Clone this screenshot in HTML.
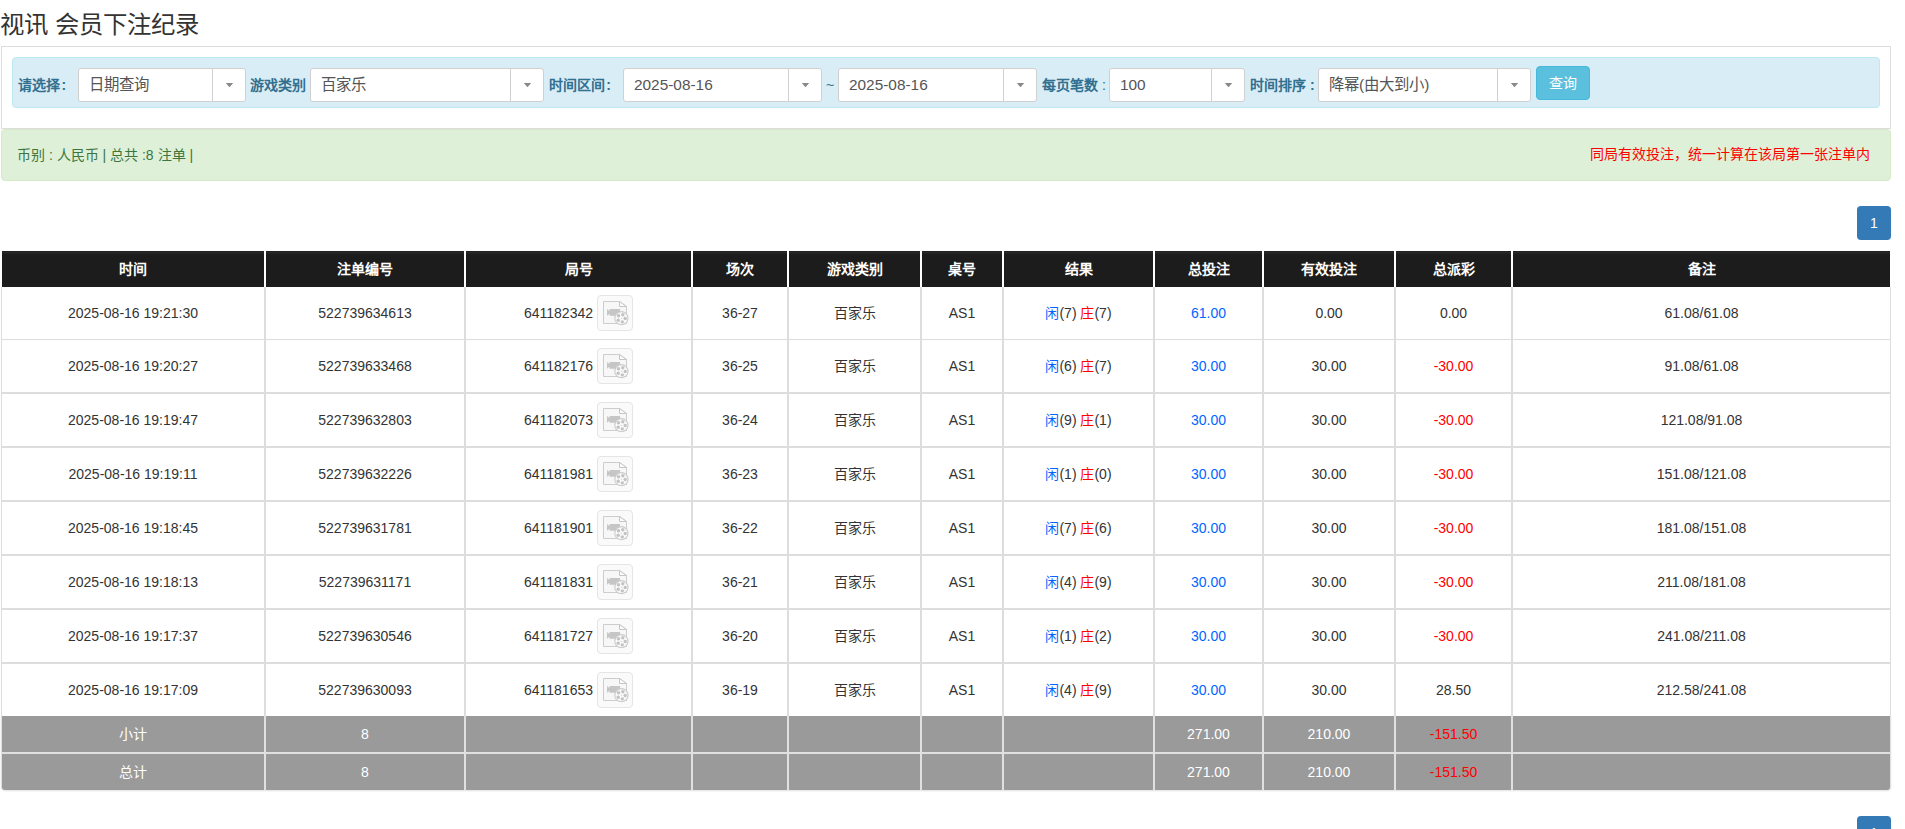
<!DOCTYPE html>
<html lang="zh-CN"><head><meta charset="utf-8"><title>视讯 会员下注纪录</title>
<style>
*{box-sizing:border-box;margin:0;padding:0}
html,body{width:1905px;height:829px;overflow:hidden;background:#fff}
body{font-family:"Liberation Sans",sans-serif;font-size:14px;color:#333;position:relative}
.a{position:absolute}
.title{left:0;top:12px;font-size:24.4px;line-height:26px;color:#333;white-space:nowrap}
.panel{left:1px;top:46px;width:1890px;height:83px;border:1px solid #ddd;background:#fff}
.info{left:12px;top:57px;width:1868px;height:51px;border:1px solid #bce8f1;background:#d9edf7;border-radius:4px}
.lbl{color:#31708f;font-weight:bold;font-size:14px;line-height:16px;top:77px;white-space:nowrap}
.sel{top:68px;height:34px;border:1px solid #d0d0d0;border-radius:3px;background:#fff}
.sel .t{position:absolute;left:10px;top:7px;font-size:15.4px;line-height:17px;color:#555;white-space:nowrap}
.sel .d{position:absolute;top:0;bottom:0;width:1px;background:#d0d0d0}
.sel .ar{position:absolute;top:13.9px;width:7.4px;height:4.3px;background:#888;clip-path:polygon(0 0,100% 0,50% 100%)}
.btn{left:1536px;top:66px;width:54px;height:34px;background:#5bc0de;border:1px solid #46b8da;border-radius:4px;color:#fff;font-size:14px;line-height:32px;text-align:center}
.ok{left:1px;top:129px;width:1890px;height:52px;border:1px solid #d6e9c6;background:#dff0d8;border-radius:4px}
.okt{top:147px;left:17px;color:#3c763d;font-size:14px;line-height:16px;white-space:nowrap}
.red{color:#f00}
.redt{top:146px;right:35px;font-size:14px;line-height:16px;white-space:nowrap}
.pg{left:1857px;width:34px;height:34px;background:#337ab7;border-radius:4px;color:#fff;text-align:center;font-size:14px;line-height:34px}
.cell{position:absolute;text-align:center;white-space:nowrap;overflow:hidden}
.th{top:251px;height:36px;background:linear-gradient(#202020 0,#202020 1px,#292929 1px,#262626 2px,#1e1e1e 3px,#1c1c1c 4px);color:#fff;font-weight:bold;line-height:36px;font-size:14px}
.td{height:52px;line-height:52px;background:#fff}
.tf{height:36px;line-height:36px;background:#9a9a9a;color:#fff}
.blue{color:#0066ff}
.ico{display:inline-block;vertical-align:middle;width:36px;height:36px;border:1px solid #e5e5e5;border-radius:4px;background:#fafafa;margin-left:4px;position:relative;top:-1px}
.ico svg{position:absolute;left:-1px;top:-1px}
</style></head><body>

<div class="a title">视讯 会员下注纪录</div>
<div class="a panel"></div>
<div class="a info"></div>
<div class="a lbl" style="left:18px">请选择<span style="margin-left:1.5px">:</span></div>
<div class="a lbl" style="left:250px">游戏类别</div>
<div class="a lbl" style="left:549px">时间区间<span style="margin-left:1.3px">:</span></div>
<div class="a lbl" style="left:826px;font-weight:normal">~</div>
<div class="a lbl" style="left:1042px">每页笔数<span style="font-weight:normal"> : </span></div>
<div class="a lbl" style="left:1250px">时间排序 :</div>
<div class="a sel" style="left:78px;width:168px"><span class="t">日期查询</span><span class="d" style="left:133px"></span><span class="ar" style="left:146.8px"></span></div>
<div class="a sel" style="left:310px;width:234px"><span class="t">百家乐</span><span class="d" style="left:199px"></span><span class="ar" style="left:212.79999999999995px"></span></div>
<div class="a sel" style="left:623px;width:199px"><span class="t">2025-08-16</span><span class="d" style="left:164px"></span><span class="ar" style="left:177.79999999999995px"></span></div>
<div class="a sel" style="left:838px;width:199px"><span class="t">2025-08-16</span><span class="d" style="left:164px"></span><span class="ar" style="left:177.79999999999995px"></span></div>
<div class="a sel" style="left:1109px;width:136px"><span class="t">100</span><span class="d" style="left:101px"></span><span class="ar" style="left:114.79999999999995px"></span></div>
<div class="a sel" style="left:1318px;width:213px"><span class="t">降幂(由大到小)</span><span class="d" style="left:178px"></span><span class="ar" style="left:191.79999999999995px"></span></div>
<div class="a btn">查询</div>
<div class="a ok"></div>
<div class="a okt">币别 : 人民币 | 总共 :8 注单 |</div>
<div class="a redt red">同局有效投注，统一计算在该局第一张注单内</div>
<div class="a pg" style="top:206px">1</div>
<div class="a pg" style="top:816px">1</div>
<div class="a" style="left:1px;top:287px;width:1890px;height:429px;background:#ddd"></div>
<div class="cell th" style="left:2px;width:262px">时间</div>
<div class="cell th" style="left:266px;width:198px">注单编号</div>
<div class="cell th" style="left:466px;width:225px">局号</div>
<div class="cell th" style="left:693px;width:94px">场次</div>
<div class="cell th" style="left:789px;width:131px">游戏类别</div>
<div class="cell th" style="left:922px;width:80px">桌号</div>
<div class="cell th" style="left:1004px;width:149px">结果</div>
<div class="cell th" style="left:1155px;width:107px">总投注</div>
<div class="cell th" style="left:1264px;width:130px">有效投注</div>
<div class="cell th" style="left:1396px;width:115px">总派彩</div>
<div class="cell th" style="left:1513px;width:377px">备注</div>
<div class="cell td" style="left:2px;top:287px;width:262px">2025-08-16 19:21:30</div>
<div class="cell td" style="left:266px;top:287px;width:198px">522739634613</div>
<div class="cell td" style="left:466px;top:287px;width:225px">641182342<span class="ico"><svg width="36" height="36" viewBox="0 0 36 36"><path d="M6.5 6.5H22.5L29.5 11.5V28.5H6.5Z" fill="#f7f7f7" stroke="#cdcdcd" stroke-width="1"/><path d="M22.5 6.5V11.5H29.5Z" fill="#fcfcfc" stroke="#c6c6c6" stroke-width="1" stroke-linejoin="round"/><path d="M10 14L12.5 16V14H23.1V20.7H12.5V18.7L10 20.7Z" fill="#c6c6c6"/><circle cx="24.4" cy="23.2" r="6.6" fill="#f9f9f9" stroke="#cbcbcb" stroke-width="1.1"/><g fill="#c3c3c3"><circle cx="21.5" cy="20.8" r="1.7"/><circle cx="25.8" cy="19.7" r="1.7"/><circle cx="28.2" cy="23.5" r="1.7"/><circle cx="25.3" cy="26.9" r="1.7"/><circle cx="21.2" cy="25.2" r="1.7"/><rect x="23.9" y="22.9" width="1" height="0.8"/></g></svg></span></div>
<div class="cell td" style="left:693px;top:287px;width:94px">36-27</div>
<div class="cell td" style="left:789px;top:287px;width:131px">百家乐</div>
<div class="cell td" style="left:922px;top:287px;width:80px">AS1</div>
<div class="cell td" style="left:1004px;top:287px;width:149px"><span class="blue">闲</span>(7) <span class="red">庄</span>(7)</div>
<div class="cell td" style="left:1155px;top:287px;width:107px"><span class="blue">61.00</span></div>
<div class="cell td" style="left:1264px;top:287px;width:130px">0.00</div>
<div class="cell td" style="left:1396px;top:287px;width:115px">0.00</div>
<div class="cell td" style="left:1513px;top:287px;width:377px">61.08/61.08</div>
<div class="cell td" style="left:2px;top:340px;width:262px">2025-08-16 19:20:27</div>
<div class="cell td" style="left:266px;top:340px;width:198px">522739633468</div>
<div class="cell td" style="left:466px;top:340px;width:225px">641182176<span class="ico"><svg width="36" height="36" viewBox="0 0 36 36"><path d="M6.5 6.5H22.5L29.5 11.5V28.5H6.5Z" fill="#f7f7f7" stroke="#cdcdcd" stroke-width="1"/><path d="M22.5 6.5V11.5H29.5Z" fill="#fcfcfc" stroke="#c6c6c6" stroke-width="1" stroke-linejoin="round"/><path d="M10 14L12.5 16V14H23.1V20.7H12.5V18.7L10 20.7Z" fill="#c6c6c6"/><circle cx="24.4" cy="23.2" r="6.6" fill="#f9f9f9" stroke="#cbcbcb" stroke-width="1.1"/><g fill="#c3c3c3"><circle cx="21.5" cy="20.8" r="1.7"/><circle cx="25.8" cy="19.7" r="1.7"/><circle cx="28.2" cy="23.5" r="1.7"/><circle cx="25.3" cy="26.9" r="1.7"/><circle cx="21.2" cy="25.2" r="1.7"/><rect x="23.9" y="22.9" width="1" height="0.8"/></g></svg></span></div>
<div class="cell td" style="left:693px;top:340px;width:94px">36-25</div>
<div class="cell td" style="left:789px;top:340px;width:131px">百家乐</div>
<div class="cell td" style="left:922px;top:340px;width:80px">AS1</div>
<div class="cell td" style="left:1004px;top:340px;width:149px"><span class="blue">闲</span>(6) <span class="red">庄</span>(7)</div>
<div class="cell td" style="left:1155px;top:340px;width:107px"><span class="blue">30.00</span></div>
<div class="cell td" style="left:1264px;top:340px;width:130px">30.00</div>
<div class="cell td" style="left:1396px;top:340px;width:115px"><span class="red">-30.00</span></div>
<div class="cell td" style="left:1513px;top:340px;width:377px">91.08/61.08</div>
<div class="cell td" style="left:2px;top:394px;width:262px">2025-08-16 19:19:47</div>
<div class="cell td" style="left:266px;top:394px;width:198px">522739632803</div>
<div class="cell td" style="left:466px;top:394px;width:225px">641182073<span class="ico"><svg width="36" height="36" viewBox="0 0 36 36"><path d="M6.5 6.5H22.5L29.5 11.5V28.5H6.5Z" fill="#f7f7f7" stroke="#cdcdcd" stroke-width="1"/><path d="M22.5 6.5V11.5H29.5Z" fill="#fcfcfc" stroke="#c6c6c6" stroke-width="1" stroke-linejoin="round"/><path d="M10 14L12.5 16V14H23.1V20.7H12.5V18.7L10 20.7Z" fill="#c6c6c6"/><circle cx="24.4" cy="23.2" r="6.6" fill="#f9f9f9" stroke="#cbcbcb" stroke-width="1.1"/><g fill="#c3c3c3"><circle cx="21.5" cy="20.8" r="1.7"/><circle cx="25.8" cy="19.7" r="1.7"/><circle cx="28.2" cy="23.5" r="1.7"/><circle cx="25.3" cy="26.9" r="1.7"/><circle cx="21.2" cy="25.2" r="1.7"/><rect x="23.9" y="22.9" width="1" height="0.8"/></g></svg></span></div>
<div class="cell td" style="left:693px;top:394px;width:94px">36-24</div>
<div class="cell td" style="left:789px;top:394px;width:131px">百家乐</div>
<div class="cell td" style="left:922px;top:394px;width:80px">AS1</div>
<div class="cell td" style="left:1004px;top:394px;width:149px"><span class="blue">闲</span>(9) <span class="red">庄</span>(1)</div>
<div class="cell td" style="left:1155px;top:394px;width:107px"><span class="blue">30.00</span></div>
<div class="cell td" style="left:1264px;top:394px;width:130px">30.00</div>
<div class="cell td" style="left:1396px;top:394px;width:115px"><span class="red">-30.00</span></div>
<div class="cell td" style="left:1513px;top:394px;width:377px">121.08/91.08</div>
<div class="cell td" style="left:2px;top:448px;width:262px">2025-08-16 19:19:11</div>
<div class="cell td" style="left:266px;top:448px;width:198px">522739632226</div>
<div class="cell td" style="left:466px;top:448px;width:225px">641181981<span class="ico"><svg width="36" height="36" viewBox="0 0 36 36"><path d="M6.5 6.5H22.5L29.5 11.5V28.5H6.5Z" fill="#f7f7f7" stroke="#cdcdcd" stroke-width="1"/><path d="M22.5 6.5V11.5H29.5Z" fill="#fcfcfc" stroke="#c6c6c6" stroke-width="1" stroke-linejoin="round"/><path d="M10 14L12.5 16V14H23.1V20.7H12.5V18.7L10 20.7Z" fill="#c6c6c6"/><circle cx="24.4" cy="23.2" r="6.6" fill="#f9f9f9" stroke="#cbcbcb" stroke-width="1.1"/><g fill="#c3c3c3"><circle cx="21.5" cy="20.8" r="1.7"/><circle cx="25.8" cy="19.7" r="1.7"/><circle cx="28.2" cy="23.5" r="1.7"/><circle cx="25.3" cy="26.9" r="1.7"/><circle cx="21.2" cy="25.2" r="1.7"/><rect x="23.9" y="22.9" width="1" height="0.8"/></g></svg></span></div>
<div class="cell td" style="left:693px;top:448px;width:94px">36-23</div>
<div class="cell td" style="left:789px;top:448px;width:131px">百家乐</div>
<div class="cell td" style="left:922px;top:448px;width:80px">AS1</div>
<div class="cell td" style="left:1004px;top:448px;width:149px"><span class="blue">闲</span>(1) <span class="red">庄</span>(0)</div>
<div class="cell td" style="left:1155px;top:448px;width:107px"><span class="blue">30.00</span></div>
<div class="cell td" style="left:1264px;top:448px;width:130px">30.00</div>
<div class="cell td" style="left:1396px;top:448px;width:115px"><span class="red">-30.00</span></div>
<div class="cell td" style="left:1513px;top:448px;width:377px">151.08/121.08</div>
<div class="cell td" style="left:2px;top:502px;width:262px">2025-08-16 19:18:45</div>
<div class="cell td" style="left:266px;top:502px;width:198px">522739631781</div>
<div class="cell td" style="left:466px;top:502px;width:225px">641181901<span class="ico"><svg width="36" height="36" viewBox="0 0 36 36"><path d="M6.5 6.5H22.5L29.5 11.5V28.5H6.5Z" fill="#f7f7f7" stroke="#cdcdcd" stroke-width="1"/><path d="M22.5 6.5V11.5H29.5Z" fill="#fcfcfc" stroke="#c6c6c6" stroke-width="1" stroke-linejoin="round"/><path d="M10 14L12.5 16V14H23.1V20.7H12.5V18.7L10 20.7Z" fill="#c6c6c6"/><circle cx="24.4" cy="23.2" r="6.6" fill="#f9f9f9" stroke="#cbcbcb" stroke-width="1.1"/><g fill="#c3c3c3"><circle cx="21.5" cy="20.8" r="1.7"/><circle cx="25.8" cy="19.7" r="1.7"/><circle cx="28.2" cy="23.5" r="1.7"/><circle cx="25.3" cy="26.9" r="1.7"/><circle cx="21.2" cy="25.2" r="1.7"/><rect x="23.9" y="22.9" width="1" height="0.8"/></g></svg></span></div>
<div class="cell td" style="left:693px;top:502px;width:94px">36-22</div>
<div class="cell td" style="left:789px;top:502px;width:131px">百家乐</div>
<div class="cell td" style="left:922px;top:502px;width:80px">AS1</div>
<div class="cell td" style="left:1004px;top:502px;width:149px"><span class="blue">闲</span>(7) <span class="red">庄</span>(6)</div>
<div class="cell td" style="left:1155px;top:502px;width:107px"><span class="blue">30.00</span></div>
<div class="cell td" style="left:1264px;top:502px;width:130px">30.00</div>
<div class="cell td" style="left:1396px;top:502px;width:115px"><span class="red">-30.00</span></div>
<div class="cell td" style="left:1513px;top:502px;width:377px">181.08/151.08</div>
<div class="cell td" style="left:2px;top:556px;width:262px">2025-08-16 19:18:13</div>
<div class="cell td" style="left:266px;top:556px;width:198px">522739631171</div>
<div class="cell td" style="left:466px;top:556px;width:225px">641181831<span class="ico"><svg width="36" height="36" viewBox="0 0 36 36"><path d="M6.5 6.5H22.5L29.5 11.5V28.5H6.5Z" fill="#f7f7f7" stroke="#cdcdcd" stroke-width="1"/><path d="M22.5 6.5V11.5H29.5Z" fill="#fcfcfc" stroke="#c6c6c6" stroke-width="1" stroke-linejoin="round"/><path d="M10 14L12.5 16V14H23.1V20.7H12.5V18.7L10 20.7Z" fill="#c6c6c6"/><circle cx="24.4" cy="23.2" r="6.6" fill="#f9f9f9" stroke="#cbcbcb" stroke-width="1.1"/><g fill="#c3c3c3"><circle cx="21.5" cy="20.8" r="1.7"/><circle cx="25.8" cy="19.7" r="1.7"/><circle cx="28.2" cy="23.5" r="1.7"/><circle cx="25.3" cy="26.9" r="1.7"/><circle cx="21.2" cy="25.2" r="1.7"/><rect x="23.9" y="22.9" width="1" height="0.8"/></g></svg></span></div>
<div class="cell td" style="left:693px;top:556px;width:94px">36-21</div>
<div class="cell td" style="left:789px;top:556px;width:131px">百家乐</div>
<div class="cell td" style="left:922px;top:556px;width:80px">AS1</div>
<div class="cell td" style="left:1004px;top:556px;width:149px"><span class="blue">闲</span>(4) <span class="red">庄</span>(9)</div>
<div class="cell td" style="left:1155px;top:556px;width:107px"><span class="blue">30.00</span></div>
<div class="cell td" style="left:1264px;top:556px;width:130px">30.00</div>
<div class="cell td" style="left:1396px;top:556px;width:115px"><span class="red">-30.00</span></div>
<div class="cell td" style="left:1513px;top:556px;width:377px">211.08/181.08</div>
<div class="cell td" style="left:2px;top:610px;width:262px">2025-08-16 19:17:37</div>
<div class="cell td" style="left:266px;top:610px;width:198px">522739630546</div>
<div class="cell td" style="left:466px;top:610px;width:225px">641181727<span class="ico"><svg width="36" height="36" viewBox="0 0 36 36"><path d="M6.5 6.5H22.5L29.5 11.5V28.5H6.5Z" fill="#f7f7f7" stroke="#cdcdcd" stroke-width="1"/><path d="M22.5 6.5V11.5H29.5Z" fill="#fcfcfc" stroke="#c6c6c6" stroke-width="1" stroke-linejoin="round"/><path d="M10 14L12.5 16V14H23.1V20.7H12.5V18.7L10 20.7Z" fill="#c6c6c6"/><circle cx="24.4" cy="23.2" r="6.6" fill="#f9f9f9" stroke="#cbcbcb" stroke-width="1.1"/><g fill="#c3c3c3"><circle cx="21.5" cy="20.8" r="1.7"/><circle cx="25.8" cy="19.7" r="1.7"/><circle cx="28.2" cy="23.5" r="1.7"/><circle cx="25.3" cy="26.9" r="1.7"/><circle cx="21.2" cy="25.2" r="1.7"/><rect x="23.9" y="22.9" width="1" height="0.8"/></g></svg></span></div>
<div class="cell td" style="left:693px;top:610px;width:94px">36-20</div>
<div class="cell td" style="left:789px;top:610px;width:131px">百家乐</div>
<div class="cell td" style="left:922px;top:610px;width:80px">AS1</div>
<div class="cell td" style="left:1004px;top:610px;width:149px"><span class="blue">闲</span>(1) <span class="red">庄</span>(2)</div>
<div class="cell td" style="left:1155px;top:610px;width:107px"><span class="blue">30.00</span></div>
<div class="cell td" style="left:1264px;top:610px;width:130px">30.00</div>
<div class="cell td" style="left:1396px;top:610px;width:115px"><span class="red">-30.00</span></div>
<div class="cell td" style="left:1513px;top:610px;width:377px">241.08/211.08</div>
<div class="cell td" style="left:2px;top:664px;width:262px">2025-08-16 19:17:09</div>
<div class="cell td" style="left:266px;top:664px;width:198px">522739630093</div>
<div class="cell td" style="left:466px;top:664px;width:225px">641181653<span class="ico"><svg width="36" height="36" viewBox="0 0 36 36"><path d="M6.5 6.5H22.5L29.5 11.5V28.5H6.5Z" fill="#f7f7f7" stroke="#cdcdcd" stroke-width="1"/><path d="M22.5 6.5V11.5H29.5Z" fill="#fcfcfc" stroke="#c6c6c6" stroke-width="1" stroke-linejoin="round"/><path d="M10 14L12.5 16V14H23.1V20.7H12.5V18.7L10 20.7Z" fill="#c6c6c6"/><circle cx="24.4" cy="23.2" r="6.6" fill="#f9f9f9" stroke="#cbcbcb" stroke-width="1.1"/><g fill="#c3c3c3"><circle cx="21.5" cy="20.8" r="1.7"/><circle cx="25.8" cy="19.7" r="1.7"/><circle cx="28.2" cy="23.5" r="1.7"/><circle cx="25.3" cy="26.9" r="1.7"/><circle cx="21.2" cy="25.2" r="1.7"/><rect x="23.9" y="22.9" width="1" height="0.8"/></g></svg></span></div>
<div class="cell td" style="left:693px;top:664px;width:94px">36-19</div>
<div class="cell td" style="left:789px;top:664px;width:131px">百家乐</div>
<div class="cell td" style="left:922px;top:664px;width:80px">AS1</div>
<div class="cell td" style="left:1004px;top:664px;width:149px"><span class="blue">闲</span>(4) <span class="red">庄</span>(9)</div>
<div class="cell td" style="left:1155px;top:664px;width:107px"><span class="blue">30.00</span></div>
<div class="cell td" style="left:1264px;top:664px;width:130px">30.00</div>
<div class="cell td" style="left:1396px;top:664px;width:115px">28.50</div>
<div class="cell td" style="left:1513px;top:664px;width:377px">212.58/241.08</div>
<div class="a" style="left:1px;top:716px;width:1890px;height:74px;background:#e0e0e0;border-radius:0 0 4px 4px;box-shadow:0 1px 2px rgba(0,0,0,.12)"></div>
<div class="cell tf" style="left:2px;top:716px;width:262px;">小计</div>
<div class="cell tf" style="left:266px;top:716px;width:198px;">8</div>
<div class="cell tf" style="left:466px;top:716px;width:225px;"></div>
<div class="cell tf" style="left:693px;top:716px;width:94px;"></div>
<div class="cell tf" style="left:789px;top:716px;width:131px;"></div>
<div class="cell tf" style="left:922px;top:716px;width:80px;"></div>
<div class="cell tf" style="left:1004px;top:716px;width:149px;"></div>
<div class="cell tf" style="left:1155px;top:716px;width:107px;">271.00</div>
<div class="cell tf" style="left:1264px;top:716px;width:130px;">210.00</div>
<div class="cell tf" style="left:1396px;top:716px;width:115px;"><span class="red">-151.50</span></div>
<div class="cell tf" style="left:1513px;top:716px;width:377px;"></div>
<div class="cell tf" style="left:2px;top:754px;width:262px;border-bottom-left-radius:3px;">总计</div>
<div class="cell tf" style="left:266px;top:754px;width:198px;">8</div>
<div class="cell tf" style="left:466px;top:754px;width:225px;"></div>
<div class="cell tf" style="left:693px;top:754px;width:94px;"></div>
<div class="cell tf" style="left:789px;top:754px;width:131px;"></div>
<div class="cell tf" style="left:922px;top:754px;width:80px;"></div>
<div class="cell tf" style="left:1004px;top:754px;width:149px;"></div>
<div class="cell tf" style="left:1155px;top:754px;width:107px;">271.00</div>
<div class="cell tf" style="left:1264px;top:754px;width:130px;">210.00</div>
<div class="cell tf" style="left:1396px;top:754px;width:115px;"><span class="red">-151.50</span></div>
<div class="cell tf" style="left:1513px;top:754px;width:377px;border-bottom-right-radius:3px;"></div>
</body></html>
